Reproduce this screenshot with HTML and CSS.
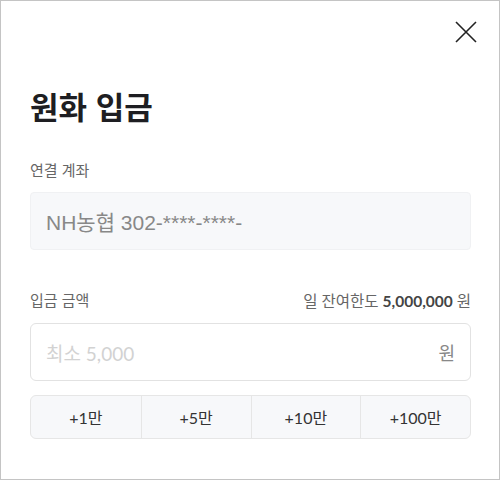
FILE: index.html
```html
<!DOCTYPE html>
<html lang="ko">
<head>
<meta charset="utf-8">
<title>원화 입금</title>
<link rel="stylesheet" href="styles.css">
</head>
<body>
<div class="modal">
  <div class="header">
    <button class="close" aria-label="닫기">
      <svg width="22" height="22" viewBox="0 0 22 22"><path d="M1 1L21 21M21 1L1 21" stroke="#222" stroke-width="1.6" fill="none"/></svg>
    </button>
  </div>
  <h1 class="title">원화 입금</h1>
  <div class="label">연결 계좌</div>
  <div class="account">NH농협 302-****-****-</div>
  <div class="row">
    <span class="label">입금 금액</span>
    <span class="limit">일 잔여한도 <b>5,000,000</b> 원</span>
  </div>
  <div class="input">
    <span class="placeholder">최소 5,000</span>
    <span class="unit">원</span>
  </div>
  <div class="quick">
    <button class="qbtn">+1만</button>
    <button class="qbtn">+5만</button>
    <button class="qbtn">+10만</button>
    <button class="qbtn">+100만</button>
  </div>
</div>
</body>
</html>
```

FILE: styles.css
```css
* { box-sizing: border-box; }
body { margin: 0; background: #fff; font-family: Lato, "Noto Sans CJK KR", sans-serif; }
.modal {
  width: 500px; height: 480px;
  border: 1px solid #c4c4c4;
  padding: 0 28px 0 29px;
}
.header {
  display: flex; justify-content: flex-end;
  padding-top: 20px; margin-right: -6px;
}
.close { border: 0; background: none; padding: 0; width: 22px; height: 22px; display: block; cursor: pointer; }
.close svg { display: block; }
.title {
  margin: 43px 0 0; font-size: 31px; line-height: 40px; font-weight: 700;
  color: #1e1e22; font-family: "Noto Sans CJK KR", sans-serif;
}
.label {
  display: block; margin-top: 34px; font-size: 15px; line-height: 20px; color: #666;
  font-family: "Noto Sans CJK KR", sans-serif;
}
.account {
  margin-top: 12px; height: 58px; background: #f7f8fa; border: 1px solid #f0f1f3; border-radius: 4px;
  display: flex; align-items: center; padding-left: 15px;
  font-family: "Liberation Sans", "Noto Sans CJK KR", sans-serif; font-size: 21px; color: #888;
}
.row {
  margin-top: 40px; display: flex; justify-content: space-between; align-items: center; height: 20px;
}
.row .label { margin-top: 0; }
.limit { font-size: 15.5px; color: #666; font-family: Lato, "Noto Sans CJK KR", sans-serif; }
.limit b { color: #444; font-weight: 700; }
.input {
  margin-top: 13px; height: 58px; border: 1px solid #e2e2e2; border-radius: 6px;
  display: flex; align-items: center; justify-content: space-between; padding: 0 15px 0 15px;
  font-size: 19px;
}
.placeholder { color: #d2d2d2; }
.unit { color: #888; font-family: "Noto Sans CJK KR", sans-serif; font-size: 18px; }
.quick {
  margin-top: 14px; height: 44px; display: grid; grid-template-columns: repeat(4, 1fr);
  border: 1px solid #e6e6e6; border-radius: 6px; background: #f7f8fa; overflow: hidden;
}
.qbtn {
  border: 0; border-left: 1px solid #e6e6e6; background: none; padding: 0;
  font-family: Lato, "Noto Sans CJK KR", sans-serif; font-size: 16px; color: #333;
}
.qbtn:first-child { border-left: 0; }
```
